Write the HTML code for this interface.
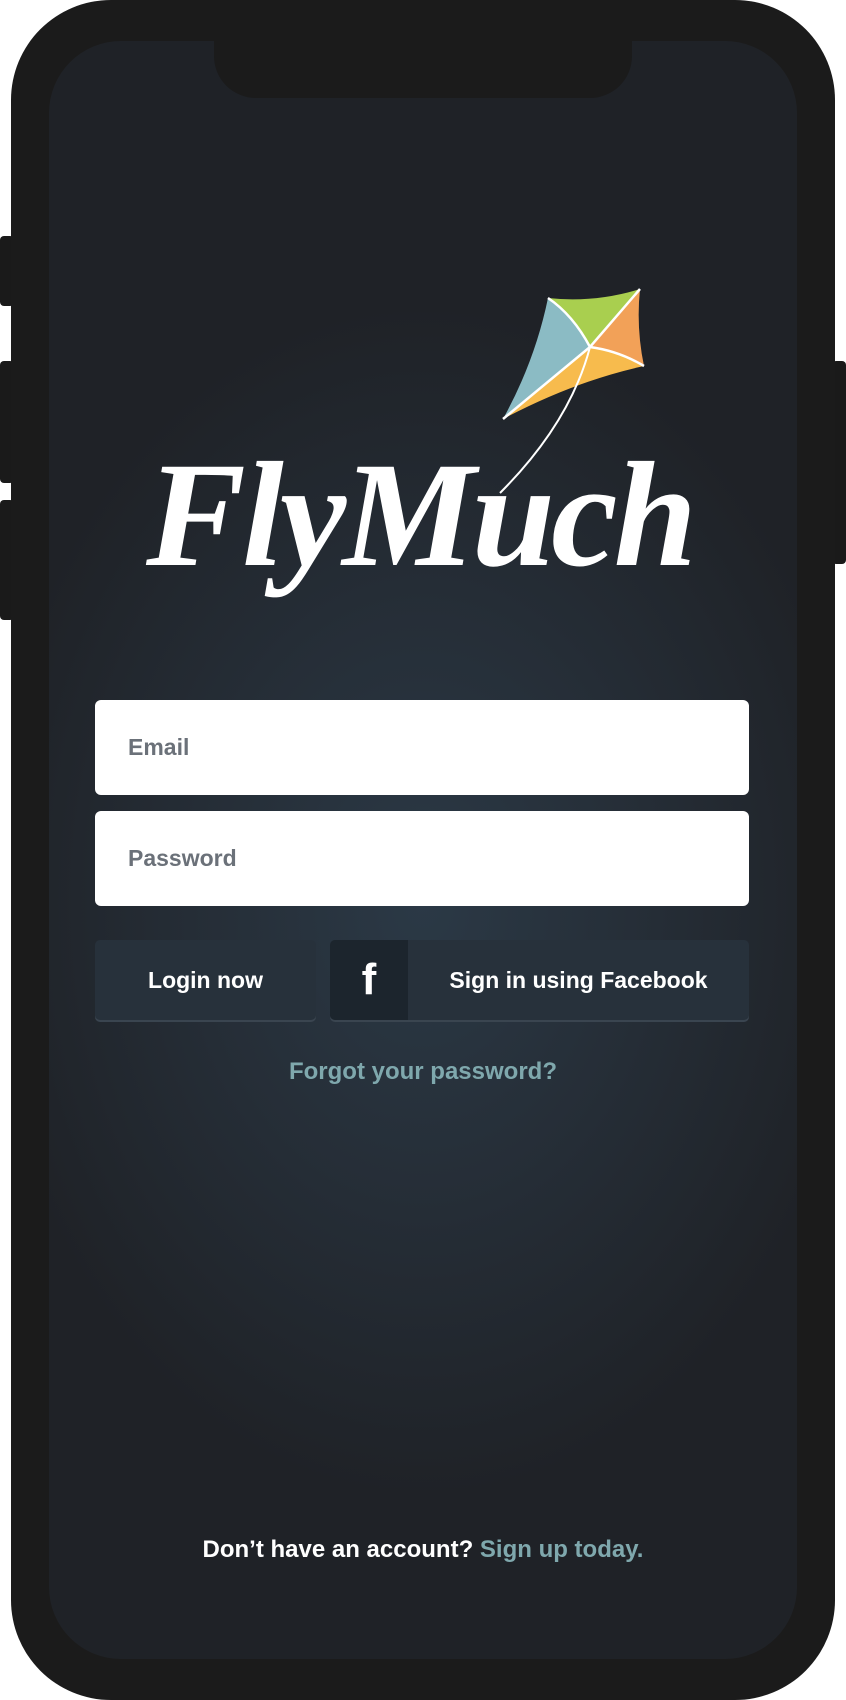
<!DOCTYPE html>
<html><head><meta charset="utf-8"><style>
*{margin:0;padding:0;box-sizing:border-box}
html,body{width:846px;height:1700px;background:#fff;overflow:hidden;font-family:"Liberation Sans",Arial,sans-serif}
.side{position:absolute;background:#1a1a1a;border-radius:4px}
.body{position:absolute;left:11px;top:0;width:824px;height:1700px;background:#1b1b1b;border-radius:100px}
.screen{position:absolute;left:49px;top:41px;width:748px;height:1618px;border-radius:72px;overflow:hidden;
background:radial-gradient(ellipse 520px 700px at 374px 860px,#2b3946 0%,#252d36 45%,#1f2227 85%)}
.notch{position:absolute;left:214px;top:30px;width:418px;height:68px;background:#1b1b1b;border-radius:0 0 42px 42px}
.logo{position:absolute;left:146px;top:440px;font-family:"Liberation Serif",serif;font-style:italic;font-weight:bold;font-size:150px;color:#fff;letter-spacing:-4px;line-height:1}
.input{position:absolute;left:95px;width:654px;height:95px;background:#fff;border-radius:6px;color:#6b7179;font-weight:bold;font-size:23px;padding-left:33px;line-height:95px}
.btn{position:absolute;top:940px;height:80px;background:#27313b;border-radius:5px;box-shadow:0 2px 0 #3a4550;color:#fff;font-weight:bold;font-size:23px;line-height:80px;text-align:center}
.fbicon{position:absolute;left:0;top:0;width:78px;height:80px;background:#1c252d;border-radius:5px 0 0 5px;font-size:44px;font-family:"Liberation Sans",sans-serif}
.txt{position:absolute;left:0;width:846px;text-align:center;font-weight:bold;font-size:24px}
</style></head><body>
<div class="side" style="left:0;top:236px;width:14px;height:70px"></div>
<div class="side" style="left:0;top:361px;width:14px;height:122px"></div>
<div class="side" style="left:0;top:500px;width:14px;height:120px"></div>
<div class="side" style="left:832px;top:361px;width:14px;height:203px"></div>
<div class="body"></div>
<div class="screen"></div>
<div class="notch"></div>
<svg style="position:absolute;left:495px;top:283px" width="160" height="230" viewBox="0 0 160 230">
<path d="M53,15 Q100,20 145,6 L95,64 Q78,32 53,15Z" fill="#a9cf4f"/>
<path d="M145,6 Q141,45 149,83 Q124,68 95,64 Z" fill="#f2a158"/>
<path d="M149,83 Q80,98 8,136 L95,64 Q124,68 149,83Z" fill="#f7bb4d"/>
<path d="M8,136 Q40,78 53,15 Q78,32 95,64 Z" fill="#8bbbc4"/>
<path d="M53,15 Q78,32 95,64 Q124,68 149,83 M145,6 L95,64 L8,136" fill="none" stroke="#fff" stroke-width="2.5"/>
<path d="M95,64 Q75,140 5,210" fill="none" stroke="#fff" stroke-width="2"/>
</svg>
<div class="logo">FlyMuch</div>
<div class="input" style="top:700px">Email</div>
<div class="input" style="top:811px">Password</div>
<div class="btn" style="left:95px;width:221px">Login now</div>
<div class="btn" style="left:330px;width:419px;padding-left:78px"><div class="fbicon">f</div>Sign in using Facebook</div>
<div class="txt" style="top:1058px;color:#7fa8ad">Forgot your password?</div>
<div class="txt" style="top:1536px;color:#fff">Don’t have an account? <span style="color:#7fa8ad">Sign up today.</span></div>
</body></html>
